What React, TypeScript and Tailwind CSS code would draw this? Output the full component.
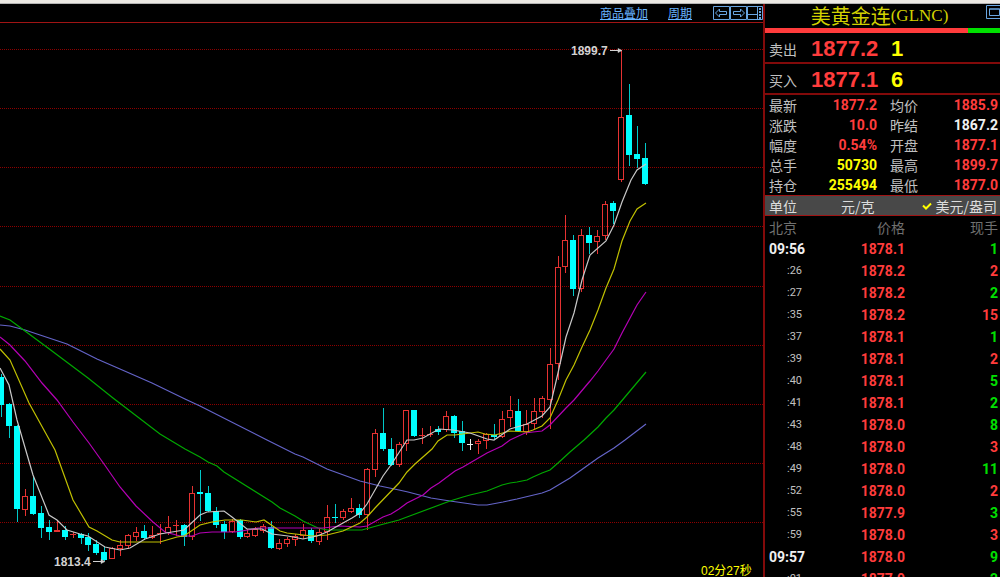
import { Fragment } from "react"

type Tone = "up" | "down" | "cross"
type Candle = [high: number, top: number, bottom: number, low: number, tone: Tone]

const STEP = 7.95

const gridLines = [49, 108, 167, 226, 286, 345, 404, 463, 522]

const candles: Candle[] = [
  [374, 377, 405, 417, "down"],
  [403, 404, 426, 438, "down"],
  [425, 426, 509, 522, "down"],
  [489, 496, 510, 516, "up"],
  [476, 496, 514, 515, "down"],
  [506, 513, 528, 538, "down"],
  [520, 527, 532, 540, "down"],
  [520, 530, 532, 532, "up"],
  [526, 530, 537, 540, "down"],
  [532, 534, 535, 538, "up"],
  [533, 534, 538, 544, "down"],
  [533, 537, 545, 551, "down"],
  [540, 544, 553, 555, "down"],
  [547, 552, 560, 561, "down"],
  [547, 548, 559, 559, "up"],
  [540, 545, 549, 556, "up"],
  [534, 535, 546, 549, "up"],
  [527, 532, 537, 541, "up"],
  [525, 531, 538, 540, "down"],
  [526, 535, 538, 539, "up"],
  [524, 533, 534, 544, "up"],
  [516, 527, 533, 535, "up"],
  [520, 525, 526, 536, "up"],
  [524, 525, 537, 546, "down"],
  [486, 493, 537, 540, "up"],
  [470, 492, 494, 521, "down"],
  [486, 493, 511, 512, "down"],
  [507, 511, 525, 528, "down"],
  [521, 524, 532, 539, "down"],
  [519, 521, 532, 533, "up"],
  [519, 520, 537, 539, "down"],
  [529, 533, 537, 538, "up"],
  [527, 529, 536, 537, "up"],
  [524, 526, 531, 533, "up"],
  [521, 527, 548, 549, "down"],
  [539, 543, 549, 550, "up"],
  [537, 539, 544, 547, "up"],
  [534, 536, 540, 546, "up"],
  [524, 530, 536, 539, "up"],
  [528, 530, 541, 543, "down"],
  [528, 532, 542, 545, "up"],
  [505, 517, 532, 540, "up"],
  [504, 517, 518, 523, "down"],
  [509, 511, 518, 520, "up"],
  [498, 508, 512, 513, "up"],
  [504, 508, 515, 518, "down"],
  [468, 469, 515, 530, "up"],
  [429, 433, 470, 477, "up"],
  [408, 433, 449, 451, "down"],
  [438, 449, 465, 466, "down"],
  [442, 444, 465, 467, "up"],
  [410, 410, 444, 451, "up"],
  [410, 410, 436, 437, "down"],
  [428, 435, 436, 444, "up"],
  [426, 434, 435, 437, "up"],
  [426, 429, 432, 435, "down"],
  [411, 416, 430, 432, "up"],
  [415, 416, 433, 438, "down"],
  [421, 431, 443, 451, "down"],
  [439, 444, 445, 450, "cross"],
  [439, 441, 444, 454, "up"],
  [433, 434, 441, 449, "up"],
  [424, 435, 437, 439, "down"],
  [411, 419, 437, 438, "up"],
  [396, 410, 418, 427, "up"],
  [399, 411, 431, 432, "down"],
  [410, 424, 432, 435, "up"],
  [398, 411, 424, 429, "up"],
  [396, 398, 412, 418, "up"],
  [348, 364, 400, 429, "up"],
  [256, 267, 364, 380, "up"],
  [215, 240, 267, 273, "up"],
  [235, 240, 289, 296, "down"],
  [229, 235, 289, 292, "up"],
  [227, 235, 243, 254, "down"],
  [230, 236, 242, 254, "up"],
  [201, 204, 236, 240, "up"],
  [201, 203, 211, 224, "down"],
  [50, 117, 180, 182, "up"],
  [84, 115, 155, 166, "down"],
  [126, 154, 159, 168, "down"],
  [143, 158, 184, 185, "down"],
]

const averages = [
  {
    name: "MA60",
    color: "#6464c8",
    points:
      "0,325 10,326 25,330 40,335 67,344 97,359 120,369 152,383 185,399 200,406 267,440 295,454 303,457 327,469 360,481 380,486 399,490 408,492 431,498 450,501 478,505 487,505 503,502 517,499 542,493 550,490 570,478 598,458 614,448 625,440 646,424",
  },
  {
    name: "MA40",
    color: "#00a800",
    points:
      "0,316 10,320 25,331 48,348 88,378 113,398 160,434 185,449 200,457 208,462 217,466 224,472 272,502 280,508 295,516 303,521 318,528 327,530 362,530 380,525 399,520 407,517 450,501 463,497 470,495 487,491 502,485 510,483 517,482 527,480 533,477 542,473 550,470 558,463 570,452 584,440 598,427 606,418 614,410 630,391 646,372",
  },
  {
    name: "MA20",
    color: "#b400b4",
    points:
      "0,337 10,345 25,361 42,383 57,400 73,422 89,443 104,464 120,487 136,506 153,522 165,532 180,536 192,536 200,533 212,532 235,532 248,530 258,528 323,528 340,526 360,527 367,526 383,517 391,514 399,509 407,503 423,495 431,488 439,483 455,471 463,467 487,453 502,446 510,440 525,433 533,432 542,431 550,425 566,408 574,400 590,381 598,371 614,349 622,333 637,305 646,292",
  },
  {
    name: "MA10",
    color: "#c0c000",
    points:
      "0,349 10,360 29,403 55,450 73,500 89,527 97,531 112,540 120,542 160,542 177,537 184,536 200,525 212,522 225,520 242,520 256,522 264,520 280,531 287,533 312,536 327,535 343,531 360,523 367,517 375,508 399,483 407,472 415,464 432,449 438,441 447,435 455,435 478,432 485,434 495,435 510,431 527,432 533,430 542,426 550,418 558,400 566,380 574,365 582,347 590,330 598,310 606,288 614,269 622,241 630,221 637,209 646,203",
  },
  {
    name: "MA5",
    color: "#c8c8c8",
    points:
      "0,368 9,385 17,420 33,475 49,515 57,520 67,530 80,534 88,536 105,547 120,550 130,548 145,539 160,534 184,530 200,515 207,512 224,511 232,517 247,529 262,529 272,534 288,536 303,539 317,536 327,532 343,523 352,518 360,513 367,504 383,476 391,465 407,440 414,440 423,438 439,429 453,430 470,433 487,439 494,440 510,429 527,424 542,416 550,407 558,373 566,337 574,313 582,280 590,255 606,241 614,225 622,202 631,180 637,170 646,164",
  },
]

const quotes = [
  { label: "卖出", price: "1877.2", size: "1" },
  { label: "买入", price: "1877.1", size: "6" },
]

const stats = [
  ["最新", "1877.2", "text-[#ff3c3c]", "均价", "1885.9", "text-[#ff3c3c]"],
  ["涨跌", "10.0", "text-[#ff3c3c]", "昨结", "1867.2", "text-[#f0f0f0]"],
  ["幅度", "0.54%", "text-[#ff3c3c]", "开盘", "1877.1", "text-[#ff3c3c]"],
  ["总手", "50730", "text-[#ffff00]", "最高", "1899.7", "text-[#ff3c3c]"],
  ["持仓", "255494", "text-[#ffff00]", "最低", "1877.0", "text-[#ff3c3c]"],
]

const ticks = [
  { time: "09:56", price: "1878.1", volume: 1, buy: false },
  { time: ":26", price: "1878.2", volume: 2, buy: true },
  { time: ":27", price: "1878.2", volume: 2, buy: false },
  { time: ":35", price: "1878.2", volume: 15, buy: true },
  { time: ":37", price: "1878.1", volume: 1, buy: false },
  { time: ":39", price: "1878.1", volume: 2, buy: true },
  { time: ":40", price: "1878.1", volume: 5, buy: false },
  { time: ":41", price: "1878.1", volume: 2, buy: false },
  { time: ":43", price: "1878.0", volume: 8, buy: false },
  { time: ":48", price: "1878.0", volume: 3, buy: true },
  { time: ":49", price: "1878.0", volume: 11, buy: false },
  { time: ":52", price: "1878.0", volume: 2, buy: true },
  { time: ":55", price: "1877.9", volume: 3, buy: false },
  { time: ":59", price: "1878.0", volume: 3, buy: true },
  { time: "09:57", price: "1878.0", volume: 9, buy: false },
  { time: ":01", price: "1877.9", volume: 2, buy: false },
]

function CandleShape({ candle, x }: { candle: Candle; x: number }) {
  const [high, top, bottom, low, tone] = candle
  const height = Math.max(bottom - top, 1)

  if (tone === "down") {
    return (
      <g fill="#00ffff">
        <rect x={x} y={high} width={1} height={low - high} fill="#00c8c8" />
        <rect x={x - 3} y={top} width={6} height={height} />
      </g>
    )
  }
  if (tone === "cross") {
    return (
      <g fill="#f0f0f0">
        <rect x={x} y={high} width={1} height={low - high} />
        <rect x={x - 3} y={top} width={6} height={1} />
      </g>
    )
  }
  return (
    <g fill="#e63232">
      <rect x={x} y={high} width={1} height={top - high} />
      <rect x={x} y={bottom} width={1} height={low - bottom} />
      {height < 3 ? (
        <rect x={x - 3} y={top} width={6} height={height} />
      ) : (
        <rect x={x - 2.5} y={top + 0.5} width={5} height={height - 1} fill="none" stroke="#e63232" />
      )}
    </g>
  )
}

function Chart() {
  return (
    <svg
      viewBox="0 23 763 554"
      preserveAspectRatio="xMinYMin meet"
      className="block min-h-0 w-full flex-1 font-['Liberation_Sans','Noto_Sans_CJK_SC',sans-serif]"
      role="img"
      aria-label="K线图"
    >
      {gridLines.map((y) => (
        <line key={y} x1={0} x2={763} y1={y + 0.5} y2={y + 0.5} stroke="#8c0000" strokeDasharray="1 1" />
      ))}
      {candles.map((candle, i) => (
        <CandleShape key={i} candle={candle} x={Math.round(1 + i * STEP)} />
      ))}
      {averages.map((ma) => (
        <polyline key={ma.name} points={ma.points} fill="none" stroke={ma.color} strokeWidth={1.2} />
      ))}
      <g fill="#d2d2d2" fontSize={12} fontWeight={700}>
        <text x={571} y={55}>1899.7</text>
        <text x={54} y={566}>1813.4</text>
      </g>
      <g stroke="#d2d2d2" fill="#d2d2d2">
        <path d="M610 50.5h9M93 561.5h9" />
        <path d="M618 48.500l4 2-4 2zM101 559.500l4 2-4 2z" strokeWidth={0.5} />
      </g>
      <text x={701} y={575} fill="#ffff00" fontSize={12}>
        02分27秒
      </text>
    </svg>
  )
}

function Toolbar() {
  return (
    <nav className="flex h-[19px] shrink-0 items-center border-b border-[#a01414] text-xs leading-4 text-[#69b4ff]">
      <a href="#overlay" className="ml-auto underline">商品叠加</a>
      <a href="#period" className="ml-5 underline">周期</a>
      <div className="ml-[21px] flex">
        <button type="button" aria-label="向左">
          <svg width="17" height="15" viewBox="0 0 17 15" fill="none" stroke="#69a5e1">
            <path d="M.5 .5h16v13H.5z" />
            <path d="M2.500 7l4-4v2.500h7v3h-7V11z" />
          </svg>
        </button>
        <button type="button" aria-label="向右">
          <svg width="17" height="15" viewBox="0 0 17 15" fill="none" stroke="#69a5e1">
            <path d="M.5 .5h16v13H.5z" />
            <path d="M14.500 7l-4-4v2.500h-7v3h7V11z" />
          </svg>
        </button>
        <button type="button" aria-label="布局">
          <svg width="16" height="15" viewBox="0 0 16 15" fill="none" stroke="#69a5e1">
            <path d="M.5 .5h15v13H.5zM1 8.500h9M10.500 1v12" />
            <path d="M13 2v11" strokeWidth="2" strokeDasharray="2 1" />
          </svg>
        </button>
      </div>
    </nav>
  )
}

function QuotePanel() {
  return (
    <aside className="flex w-[237px] shrink-0 flex-col border-l-2 border-[#820a0a] text-sm text-[#c0c0c0]">
      <header className="flex h-6 shrink-0 items-center">
        <h1 className="flex flex-1 items-center justify-center pl-2 text-xl leading-6 text-[#d2d200]">
          美黄金连<span className="font-['Liberation_Serif',serif] text-[17px] leading-6">(GLNC)</span>
        </h1>
        <button type="button" aria-label="还原窗口" className="mb-2 shrink-0">
          <svg width="14" height="14" viewBox="0 0 14 14" fill="none" stroke="#69a5e1">
            <path d="M.5 .5h15v13H.5z" />
            <path d="M3.500 4h10v6.500h-10zM3 4h11" />
          </svg>
        </button>
      </header>
      <div className="flex h-[5px] shrink-0">
        <div className="w-[203px] bg-[#ff3c3c]" />
        <div className="flex-1 bg-[#00e100]" />
      </div>

      {quotes.map((q) => (
        <div key={q.label} className="flex h-[31px] shrink-0 items-center border-b-2 border-[#820a0a] pt-0.5 pl-1">
          <span className="w-[42px]">{q.label}</span>
          <span className="w-[80px] font-['Liberation_Sans',sans-serif] text-[22px] font-bold text-[#ff3c3c]">{q.price}</span>
          <span className="font-['Liberation_Sans',sans-serif] text-[22px] font-bold text-[#ffff00]">{q.size}</span>
        </div>
      ))}

      <dl className="grid shrink-0 grid-cols-[36px_72px_1fr_1fr] pr-0.5 pl-1 leading-5">
        {stats.map(([label, value, tone, label2, value2, tone2]) => (
          <Fragment key={label}>
            <dt>{label}</dt>
            <dd className={`text-right font-[Roboto,sans-serif] font-bold ${tone}`}>{value}</dd>
            <dt className="pl-[13px]">{label2}</dt>
            <dd className={`text-right font-[Roboto,sans-serif] font-bold ${tone2}`}>{value2}</dd>
          </Fragment>
        ))}
      </dl>

      <div className="flex h-[21px] shrink-0 items-center border-y border-[#a01414] bg-[#484848] pr-[3px] pl-1 text-[#dcdcdc]">
        <span className="w-[72px]">单位</span>
        <button type="button">元/克</button>
        <button type="button" className="ml-auto flex items-center gap-1">
          <svg width="10" height="8" viewBox="0 0 10 8" fill="none" stroke="#ffff00" strokeWidth="2">
            <path d="M1 3.500l3 3L9 1.500" />
          </svg>
          美元/盎司
        </button>
      </div>

      <table className="w-full table-fixed">
        <thead>
          <tr className="h-[22px] leading-[22px] text-[#707070]">
            <th className="w-[76px] pl-1 text-left font-normal">北京</th>
            <th className="w-[64px] text-right font-normal">价格</th>
            <th className="pr-0.5 text-right font-normal">现手</th>
          </tr>
        </thead>
        <tbody className="font-[Roboto,sans-serif] font-bold">
          {ticks.map((t) => (
            <tr key={t.time} className="h-[22px] leading-[22px]">
              {t.time.startsWith(":") ? (
                <td className="pl-[22px] text-[11px] leading-[22px] font-normal">{t.time}</td>
              ) : (
                <td className="pl-1 text-[#f0f0f0]">{t.time}</td>
              )}
              <td className="text-right text-[#ff3c3c]">{t.price}</td>
              <td className={`pr-0.5 text-right ${t.buy ? "text-[#ff3c3c]" : "text-[#00e100]"}`}>{t.volume}</td>
            </tr>
          ))}
        </tbody>
      </table>
    </aside>
  )
}

export default function App() {
  return (
    <div className="flex h-screen flex-col overflow-hidden bg-black font-['Noto_Sans_CJK_SC',sans-serif]">
      <div className="h-1 shrink-0 border-b border-[#b4b4b4] bg-[#ece9e4]" />
      <div className="flex min-h-0 flex-1">
        <main className="flex min-w-0 flex-1 flex-col">
          <Toolbar />
          <Chart />
        </main>
        <QuotePanel />
      </div>
    </div>
  )
}
